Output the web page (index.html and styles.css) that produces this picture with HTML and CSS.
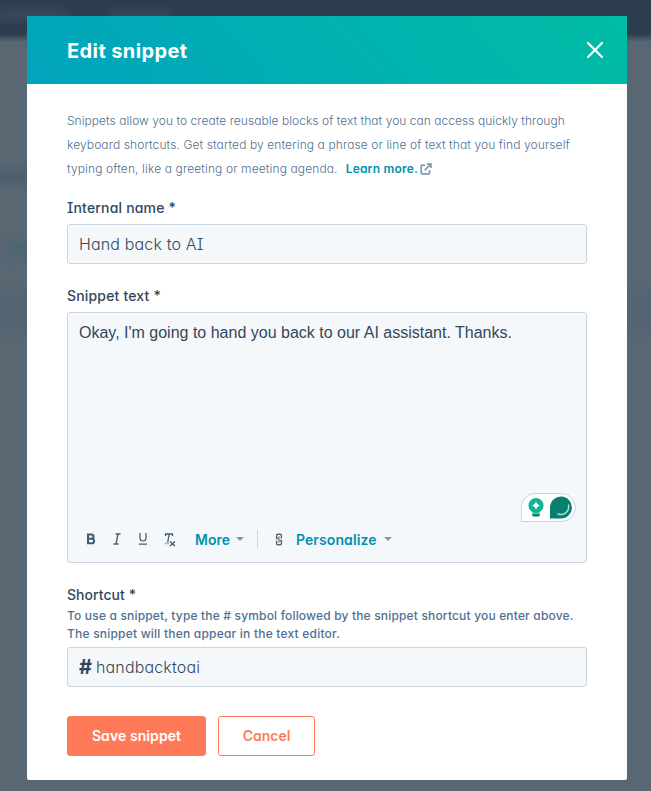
FILE: index.html
```html
<!DOCTYPE html>
<html lang="en">
<head>
<meta charset="utf-8">
<title>Edit snippet</title>
<link rel="stylesheet" href="styles.css">
</head>
<body>
<div class="backdrop"><i class="smudge s1"></i><i class="smudge s2"></i><i class="smudge s3"></i><i class="smudge s4"></i><i class="smudge s5"></i></div>
<main class="modal">
  <header class="modal-header">
    <h1>Edit snippet</h1>
    <svg class="close" width="18" height="18" viewBox="0 0 18 18"><path d="M2 2l14 14M16 2L2 16" fill="none" stroke="#fff" stroke-width="2.2" stroke-linecap="round"/></svg>
  </header>
  <div class="modal-body">
    <p class="intro"><span class="intro-1">Snippets allow you to create reusable blocks of text that you can access quickly through</span><br><span class="intro-2">keyboard shortcuts. Get started by entering a phrase or line of text that you find yourself</span><br><span class="intro-3">typing often, like a greeting or meeting agenda.</span><a class="learn">Learn more.<svg width="12" height="12" viewBox="0 0 12 12"><path d="M5 2.2H2.2Q1.2 2.2 1.2 3.2V9.8Q1.2 10.8 2.2 10.8H8.6Q9.6 10.8 9.6 9.8V7.2M4.6 7.4L10.3 1.7M7 1.2H10.9V5" fill="none" stroke="#7c98b6" stroke-width="1.7"/></svg></a></p>
    <label class="label">Internal name *</label>
    <div class="input name-input">Hand back to AI</div>
    <label class="label snippet-label">Snippet text *</label>
    <div class="editor">
      <div class="editor-text">Okay, I'm going to hand you back to our AI assistant. Thanks.</div>
      <div class="assistant">
        <svg width="55" height="29" viewBox="0 0 55 29"><path d="M.5 28.500V14A13.500 13.500 0 0 1 14 .5H40.500A14 14 0 0 1 40.500 28.500Z" fill="#fff" stroke="#cfd0dc"/><circle cx="15" cy="12.500" r="7.500" fill="#10b294"/><path d="M11 17H19V19.500H11Z" fill="#10b294"/><path d="M15 8Q15.800 11.700 19.300 12.500Q15.800 13.300 15 16.800Q14.200 13.300 10.700 12.500Q14.200 11.700 15 8Z" fill="#fff"/><path d="M11.200 20.500H18.800V21.400Q18.800 23.600 17 23.600H13Q11.200 23.600 11.200 21.400Z" fill="#08806f"/><path d="M29 25.500V14A11 11 0 1 1 40 25.500Z" fill="#087f6f"/><path d="M47.500 12C48.500 18.500 43.500 23 37 21" fill="none" stroke="#9fe0d0" stroke-width="1.500" stroke-linecap="round"/></svg>
      </div>
      <div class="toolbar">
        <svg class="icon" width="10" height="12" viewBox="0 0 10 12"><path d="M2 1.500H5.300Q7.500 1.500 7.500 3.600T5.300 5.700H2ZM2 5.700H5.800Q8.100 5.700 8.100 8T5.800 10.300H2Z" fill="none" stroke="#425b76" stroke-width="2.100"/></svg>
        <svg class="icon" width="10" height="12" viewBox="0 0 10 12"><path d="M3.500 1H8.500M1.500 11H6.500M6 1L4 11" fill="none" stroke="#425b76" stroke-width="1.300"/></svg>
        <svg class="icon" width="10" height="12" viewBox="0 0 10 12"><path d="M2 0V5Q2 8 5 8T8 5V0M1 11.200H9" fill="none" stroke="#425b76" stroke-width="1.200"/></svg>
        <svg class="icon wide" width="12" height="14" viewBox="0 0 12 14"><path d="M1.500 3V1H8.500V3M5.200 1L3.700 9.500M6 8.500L11 13M11 8.500L6 13" fill="none" stroke="#425b76" stroke-width="1.300"/><path d="M.8 10.500H5" stroke="#a9b4c0" stroke-width="1.500"/></svg>
        <span class="more">More</span><i class="caret"></i>
        <i class="divider"></i>
        <svg class="link" width="8" height="13" viewBox="0 0 8 13"><path d="M1.600 6V2.500Q1.600 1.200 2.800 1.200H5.200Q6.400 1.200 6.400 2.500V5.500M1.600 7.500V10.500Q1.600 11.800 2.800 11.800H5.200Q6.400 11.800 6.400 10.500V7M2 5.500H4M4 7.500H6" fill="none" stroke="#5b6270" stroke-width="1.400"/><path d="M4 3.300V9.700" stroke="#b98c70" stroke-width="1.500"/></svg>
        <span class="personalize">Personalize</span><i class="caret caret-wide"></i>
      </div>
    </div>
    <label class="label shortcut-label">Shortcut *</label>
    <p class="help"><span class="help-1">To use a snippet, type the # symbol followed by the snippet shortcut you enter above.</span><br><span class="help-2">The snippet will then appear in the text editor.</span></p>
    <div class="input shortcut-input"><span class="hash">#</span><span>handbacktoai</span></div>
    <div class="actions"><button class="save">Save snippet</button><button class="cancel">Cancel</button></div>
  </div>
</main>
</body>
</html>
```
FILE: styles.css
```css
* { box-sizing: border-box; }
body { margin: 0; width: 651px; height: 791px; overflow: hidden; padding: 16px 24px 0 27px; font-family: Inter, "Liberation Sans", sans-serif; font-feature-settings: "cv11", "cv08"; color: #33475b; background: #596773; }
.backdrop { position: absolute; inset: 0; overflow: hidden; background: linear-gradient(#2d3e50 0 34px, #596773 42px 100%); }
.smudge { position: absolute; filter: blur(4px); }
.s1 { left: -5px; top: 10px; width: 75px; height: 11px; background: #3a4a5a; }
.s2 { left: 108px; top: 10px; width: 64px; height: 11px; background: #374858; }
.s3 { left: -5px; top: 170px; width: 34px; height: 13px; background: #4d5d6d; }
.s4 { left: 8px; top: 243px; width: 24px; height: 13px; background: #4b6573; }
.s5 { left: -5px; top: 290px; width: 665px; height: 40px; background: #556473; }
.modal { position: relative; width: 600px; height: 764px; background: #fff; border-radius: 2px; overflow: hidden; }
.modal-header { height: 68px; display: flex; align-items: center; justify-content: space-between; padding: 0 23px 0 40px; background: linear-gradient(48deg, #00a4bd, #00bda5); color: #fff; }
h1 { margin: 1px 0 0; font-size: 20px; line-height: 28px; font-weight: 650; letter-spacing: .4px; }
.modal-body { padding: 25px 40px 0; }
.intro { margin: 0; font-size: 12px; line-height: 24px; font-weight: 300; color: #516f90; white-space: nowrap; }
.intro-1 { letter-spacing: .04px; }
.intro-2 { letter-spacing: .105px; }
.intro-3 { letter-spacing: .12px; }
.learn { margin-left: 8px; font-weight: 600; letter-spacing: .2px; color: #0091ae; }
.learn svg { vertical-align: -2px; margin-left: 2px; }
.label { display: block; margin-top: 16px; height: 22px; line-height: 22px; font-size: 14px; font-weight: 500; letter-spacing: .18px; }
.input { margin-top: 5px; height: 40px; border: 1px solid #cbd6e2; border-radius: 3px; background: #f5f8fa; padding: 0 11px; display: flex; align-items: center; font-size: 16px; font-weight: 300; letter-spacing: .15px; }
.snippet-label { margin-top: 21px; }
.editor { margin-top: 5px; height: 251px; border: 1px solid #cbd6e2; border-radius: 3px; background: #f5f8fa; display: flex; flex-direction: column; }
.editor-text { flex: 1; padding: 11px 11px; font: 16px/18px "Liberation Sans", sans-serif; white-space: nowrap; }
.assistant { height: 29px; align-self: flex-end; margin-right: 10px; }
.assistant svg { display: block; }
.toolbar { height: 40px; display: flex; align-items: center; padding: 0 0 6px 18px; font-size: 14px; font-weight: 600; color: #0091ae; }
.icon { margin-right: 16px; }
.wide { margin-right: 19px; margin-top: 2px; }
.caret { border: 4px solid transparent; border-top-color: #7c98b6; border-bottom: 0; margin-left: 6px; }
.caret-wide { margin-left: 7px; }
.divider { width: 1px; height: 18px; background: #cbd6e2; margin: 0 17px 0 13px; }
.link { margin-right: 13px; }
.personalize { letter-spacing: .1px; }
.shortcut-label { margin-top: 21px; letter-spacing: .05px; }
.help { margin: 1px 0 0; font-size: 12px; line-height: 18px; font-weight: 500; color: #516f90; white-space: nowrap; }
.help-1 { letter-spacing: .17px; }
.help-2 { letter-spacing: .21px; }
.shortcut-input { margin-top: 4px; }
.hash { font-size: 20px; font-weight: 700; width: 17px; }
.actions { display: flex; gap: 12px; margin-top: 29px; }
button { height: 40px; border: 1px solid #ff7a59; border-radius: 3px; padding: 0; font: 600 14px/20px Inter, sans-serif; font-feature-settings: "cv11"; }
.save { width: 139px; background: #ff7a59; color: #fff; letter-spacing: .08px; }
.cancel { width: 97px; background: #fff; color: #ff7a59; }
```
